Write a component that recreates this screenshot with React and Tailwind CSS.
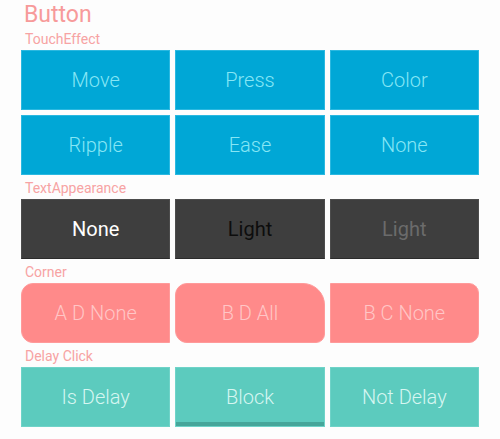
const base =
  'h-[60px] flex items-center justify-center text-[20px] font-light border';

function Label({ children }) {
  return (
    <div className="h-[24px] pt-[4px] pl-[25px] text-[14px] leading-[18px] text-[#f7a3a3]">
      {children}
    </div>
  );
}

export default function App() {
  return (
    <div
      className="w-[500px] h-[439px] bg-[#fdfdfd] overflow-hidden"
      style={{ fontFamily: 'Roboto, "Noto Sans", sans-serif' }}
    >
      <div className="h-[26px] pt-[2px] pl-[24px] text-[23px] leading-[26px] text-[#f79a9a]">
        Button
      </div>

      {/* TouchEffect */}
      <Label>TouchEffect</Label>
      <div className="grid grid-cols-3 gap-[5px] px-[21px]">
        {['Move', 'Press', 'Color', 'Ripple', 'Ease', 'None'].map((t) => (
          <div
            key={t}
            className={`${base} bg-[#00a7d6] border-[#2bb8e0] text-[#86e6f5]`}
          >
            {t}
          </div>
        ))}
      </div>

      {/* TextAppearance */}
      <Label>TextAppearance</Label>
      <div className="grid grid-cols-3 gap-[5px] px-[21px]">
        <div className={`${base} bg-[#3e3e3e] border-[#4c4c4c] border-b-[#2b2b2b] text-white font-normal`}>
          None
        </div>
        <div className={`${base} bg-[#3e3e3e] border-[#4c4c4c] border-b-[#2b2b2b] text-[#0d0d0d] font-normal`}>
          Light
        </div>
        <div className={`${base} bg-[#3e3e3e] border-[#4c4c4c] border-b-[#2b2b2b] text-[#6b6b6b] font-normal`}>
          Light
        </div>
      </div>

      {/* Corner */}
      <Label>Corner</Label>
      <div className="grid grid-cols-3 gap-[5px] px-[21px]">
        <div className={`${base} bg-[#ff8a8a] border-[#ff9a9a] text-[#ffc6c6] rounded-l-[12px]`}>
          A D None
        </div>
        <div
          className={`${base} bg-[#ff8a8a] border-[#ff9a9a] text-[#ffc6c6] rounded-tl-[12px] rounded-tr-[22px] rounded-bl-[12px] rounded-br-[9px]`}
        >
          B D All
        </div>
        <div className={`${base} bg-[#ff8a8a] border-[#ff9a9a] text-[#ffc6c6] rounded-r-[10px]`}>
          B C None
        </div>
      </div>

      {/* Delay Click */}
      <Label>Delay Click</Label>
      <div className="grid grid-cols-3 gap-[5px] px-[21px]">
        <div className={`${base} bg-[#5ccbbe] border-[#6fd3c8] text-[#d6f6f1]`}>
          Is Delay
        </div>
        <div className="relative h-[60px] flex items-center justify-center text-[20px] font-light border border-[#6fd3c8] bg-[#5ccbbe] text-[#d6f6f1]">
          Block
          <div className="absolute left-0 right-0 bottom-0 h-[4px] bg-[#46a69a]" />
        </div>
        <div className={`${base} bg-[#5ccbbe] border-[#6fd3c8] text-[#d6f6f1]`}>
          Not Delay
        </div>
      </div>
    </div>
  );
}
